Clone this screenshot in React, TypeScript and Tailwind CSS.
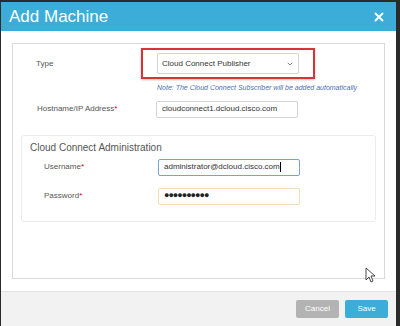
import { ChevronDown, X } from "lucide-react";

const font = { fontFamily: "Arial, 'Liberation Sans', sans-serif" };

function Field({
  label,
  required,
  children,
  indent,
}: {
  label: string;
  required?: boolean;
  children: React.ReactNode;
  indent?: boolean;
}) {
  return (
    <div className="flex items-center">
      <div className={`${indent ? "w-[116px] pl-[22px]" : "w-[121px] pl-[24px]"} text-[8px] text-[#555]`}>
        {label}
        {required && <span className="text-[#d0021b]">*</span>}
      </div>
      {children}
    </div>
  );
}

export default function App() {
  return (
    <div className="w-[400px] h-[326px] bg-[#2b2b2b] pt-[2px] pr-[4px] pl-[1px] overflow-hidden" style={font}>
      <div className="relative flex flex-col h-full bg-white">
        {/* header */}
        <div className="flex items-center justify-between h-[29px] bg-[#3badd8] pl-[8px] pr-[10px]">
          <span className="text-[17px] text-white">Add Machine</span>
          <X className="w-[14px] h-[14px] text-white" strokeWidth={3.2} />
        </div>

        {/* body */}
        <div className="px-[11px] pt-[12px] pb-[12px] h-[260px]">
          <div className="h-full border border-[#d9d9d9] pt-[4px]">
            <div className="flex items-center">
              <div className="w-[128px] pl-[23px] text-[8px] text-[#555]">Type</div>
              <div className="border-2 border-[#d6333a] px-[14px] py-[3px] shadow-[0_1px_2px_rgba(0,0,0,0.25)]">
                <div className="flex items-center justify-between w-[142px] h-[21px] border border-[#d4d4d4] rounded-[2px] px-[4px] text-[8px] text-[#333]">
                  Cloud Connect Publisher
                  <ChevronDown className="w-[8px] h-[8px] text-[#666]" strokeWidth={2.5} />
                </div>
              </div>
            </div>
            <div className="pl-[144px] mt-[4px] text-[7px] italic text-[#4a6fb8]">
              Note: The Cloud Connect Subscriber will be added automatically
            </div>
            <div className="mt-[7px]">
              <Field label="Hostname/IP Address" required>
                <div className="flex items-center w-[142px] h-[17px] ml-[22px] border border-[#d4d4d4] rounded-[2px] px-[5px] text-[8px] text-[#333]">
                  cloudconnect1.dcloud.cisco.com
                </div>
              </Field>
            </div>

            <div className="mx-[8px] mt-[17px] h-[87px] border border-[#ececec] rounded-[3px] pt-[4px]">
              <div className="pl-[8px] text-[10px] text-[#555]">Cloud Connect Administration</div>
              <div className="mt-[4px]">
                <Field label="Username" required indent>
                  <div className="flex items-center w-[142px] h-[17px] ml-[20px] border border-[#7ba0d8] rounded-[2px] px-[5px] text-[8px] text-[#333]">
                    administrator@dcloud.cisco.com
                    <span className="w-px h-[10px] bg-black" />
                  </div>
                </Field>
              </div>
              <div className="mt-[12px]">
                <Field label="Password" required indent>
                  <div className="flex items-center w-[142px] h-[17px] ml-[20px] border border-[#f1dfb0] rounded-[2px] px-[5px] text-[9px] text-[#222] tracking-[-1px]">
                    ●●●●●●●●●●
                  </div>
                </Field>
              </div>
            </div>
          </div>
        </div>

        {/* footer */}
        <div className="flex-1 flex items-center justify-end gap-[6px] bg-[#f2f2f2] border-t border-[#e4e4e4] pr-[8px]">
          <button className="w-[43px] h-[18px] rounded-[2px] bg-[#b3b3b3] text-[8px] text-white">Cancel</button>
          <button className="w-[43px] h-[18px] rounded-[2px] bg-[#3badd8] text-[8px] text-white">Save</button>
        </div>

        {/* mouse pointer */}
        <svg className="absolute left-[364px] top-[265px]" width="11" height="16" viewBox="0 0 11 16">
          <path d="M1 1 L1 13 L4 10 L6 15 L8 14 L6 9 L10 9 Z" fill="white" stroke="#333" strokeWidth="0.9" />
        </svg>
      </div>
    </div>
  );
}
